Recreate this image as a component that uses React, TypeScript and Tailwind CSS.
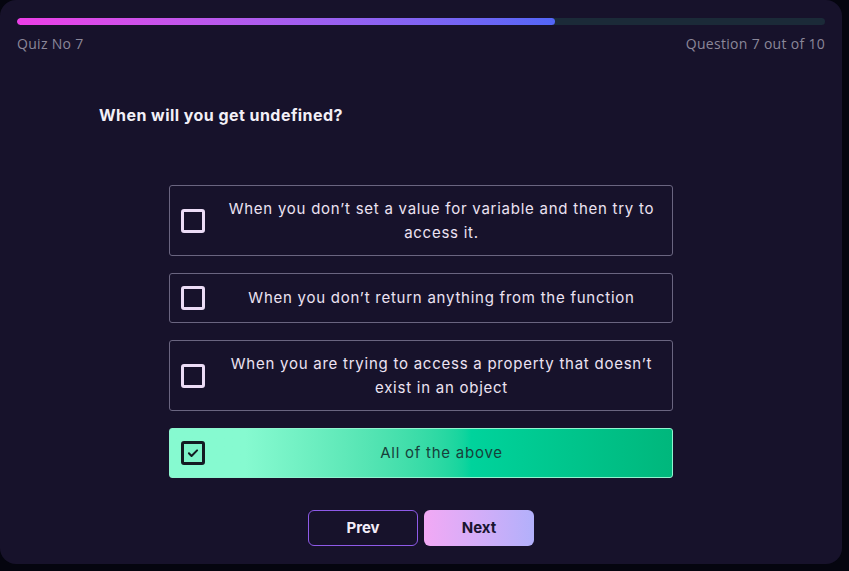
import React, { useState } from 'react';

const options = [
    "When you don’t set a value for variable and then try to access it.",
    "When you don’t return anything from the function",
    "When you are trying to access a property that doesn’t exist in an object",
    "All of the above",
];

const CheckIcon = () => (
    <svg width="14" height="14" viewBox="0 0 24 24" fill="none" stroke="currentColor" strokeWidth="3.5" strokeLinecap="round" strokeLinejoin="round">
        <path d="M5 12.5l4.5 4.5L19 7.5" />
    </svg>
);

export default function App() {
    const [selected, setSelected] = useState<number>(3);

    return (
        <div className="w-[849px] h-[571px] bg-[#05050f]" style={{ fontFamily: 'Inter, "Liberation Sans", sans-serif' }}>
            <div className="w-[842px] h-[564px] bg-[#17122b] rounded-2xl px-[17px] pt-[18px] flex flex-col">
                <div className="h-[7px] w-full rounded-full bg-[#1b2a38] overflow-hidden">
                    <div className="h-full rounded-full bg-gradient-to-r from-[#ec3ee6] to-[#5266f7]" style={{ width: '66.6%' }} />
                </div>
                <div className="flex justify-between mt-[11px] text-[14px] leading-[16px] text-[#8b8799] tracking-[0.3px]" style={{ fontFamily: '"Open Sans", sans-serif' }}>
                    <span>Quiz No 7</span>
                    <span>Question 7 out of 10</span>
                </div>

                <h1 className="mt-[53px] ml-[82px] text-[16px] leading-[20px] font-bold text-[#f3f0f7] tracking-[0.45px]">
                    When will you get undefined?
                </h1>

                <div className="mt-[60px] w-[504px] mx-auto flex flex-col gap-[17px]">
                    {options.map((opt, i) => {
                        const active = selected === i;
                        return (
                            <button
                                key={i}
                                onClick={() => setSelected(i)}
                                className={
                                    active
                                        ? "flex items-center text-left min-h-[50px] rounded-[3px] border border-[#8ff5cf] px-[11px] py-[10.5px] bg-gradient-to-r from-[#86fad0] from-15% via-[#00d39c] via-60% to-[#00b77c]"
                                        : "flex items-center text-left min-h-[50px] rounded-[3px] border border-[#6a6580] px-[11px] py-[10.5px] bg-transparent"
                                }
                            >
                                <span
                                    className={
                                        active
                                            ? "w-[24px] h-[24px] shrink-0 rounded-[3px] border-[3px] border-[#141a22] bg-[#7ef3c9] flex items-center justify-center text-[#141a22]"
                                            : "w-[24px] h-[24px] shrink-0 rounded-[3px] border-[3px] border-[#ecdcf6]"
                                    }
                                >
                                    {active && <CheckIcon />}
                                </span>
                                <span
                                    className={
                                        active
                                            ? "flex-1 text-center pl-[20px] pr-[3px] text-[15px] leading-[24px] tracking-[0.75px] text-[#17403a]"
                                            : "flex-1 text-center pl-[20px] pr-[3px] text-[15px] leading-[24px] tracking-[0.75px] text-[#ece2f2]"
                                    }
                                >
                                    {opt}
                                </span>
                            </button>
                        );
                    })}
                </div>

                <div className="flex justify-center gap-[6px] mt-[32px]">
                    <button className="w-[110px] h-[36px] rounded-md border border-[#8e5ae8] text-[15px] font-bold text-[#f3ecf8]">
                        Prev
                    </button>
                    <button className="w-[110px] h-[36px] rounded-md bg-gradient-to-r from-[#f2a9f5] to-[#b2b0fb] text-[15px] font-bold text-[#1a1530]">
                        Next
                    </button>
                </div>
            </div>
        </div>
    );
}
